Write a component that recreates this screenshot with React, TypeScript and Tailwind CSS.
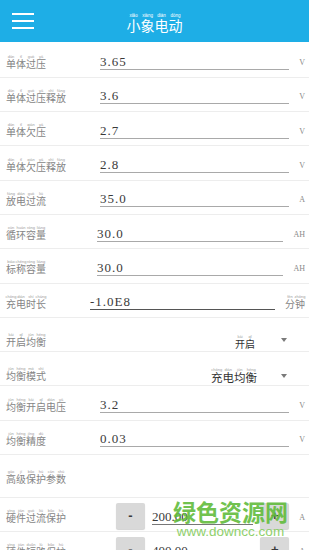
import React from 'react';

const CJK = "font-['Noto_Sans_CJK_SC',sans-serif]";
const SERIF = "font-['Liberation_Serif',serif]";

function Py({
  text,
  py,
  charClass,
  pyClass = 'text-[4px] text-[#a0a0a0]',
}: {
  text: string;
  py: string;
  charClass: string;
  pyClass?: string;
}) {
  const chars = Array.from(text);
  const pys = py.split(' ');
  return (
    <span className={`inline-flex ${CJK}`}>
      {chars.map((c, i) => (
        <span key={i} className="flex flex-col items-center">
          <span className="flex h-[5px] w-0 justify-center">
            <span className={`whitespace-nowrap leading-[5px] font-['Liberation_Sans',sans-serif] ${pyClass}`}>
              {pys[i]}
            </span>
          </span>
          <span className={`leading-none ${charClass}`}>{c}</span>
        </span>
      ))}
    </span>
  );
}

function Label({ text, py }: { text: string; py: string }) {
  return <Py text={text} py={py} charClass="text-[10px] text-[#858585]" />;
}

type InputRow = {
  label: string;
  py: string;
  value: string;
  unit: string;
  unitPy?: string;
  labelW: string;
  dark?: boolean;
};

function FieldRow({ row }: { row: InputRow }) {
  return (
    <div className="flex h-[34.3px] items-center border-b border-[#ededed] pl-[6px] pr-[4px]">
      <div className={`${row.labelW} mt-[2px] flex shrink-0`}>
        <Label text={row.label} py={row.py} />
      </div>
      <div
        className={`flex h-[20px] flex-1 items-end pb-[1px] ${
          row.dark ? 'border-b border-[#555]' : 'border-b-[1.5px] border-[#a9a9a9]'
        }`}
      >
        <span className={`${SERIF} text-[13px] leading-none tracking-[1px] text-[#3a3a3a]`}>{row.value}</span>
      </div>
      {row.unitPy ? (
        <div className="ml-[10px] mt-[3px] flex">
          <Py text={row.unit} py={row.unitPy} charClass="text-[10px] text-[#858585]" />
        </div>
      ) : (
        <div className={`ml-[10px] flex h-[20px] items-end pb-[3px] ${SERIF} text-[8px] leading-none text-[#8a8a8a]`}>
          {row.unit}
        </div>
      )}
    </div>
  );
}

function Triangle({ className }: { className: string }) {
  return (
    <div
      className={`h-0 w-0 border-x-[3.5px] border-t-[4px] border-x-transparent border-t-[#7a7a7a] ${className}`}
    />
  );
}

function StepButton({ sign }: { sign: string }) {
  return (
    <div className="flex h-[26px] w-[29px] shrink-0 items-center justify-center rounded-[2px] bg-[#d9d9d9] shadow-[0_1px_1px_rgba(0,0,0,0.18)]">
      <span className="font-['Liberation_Sans',sans-serif] text-[13px] font-bold leading-none text-[#3a3a3a]">
        {sign}
      </span>
    </div>
  );
}

function StepRow({ label, py, value, unit }: { label: string; py: string; value: string; unit: string }) {
  return (
    <div className="flex h-[34px] items-center border-b border-[#ededed] pl-[6px] pr-[4px]">
      <div className="mt-[1px] flex w-[110px] shrink-0">
        <Label text={label} py={py} />
      </div>
      <div className="mt-[2px] flex">
        <StepButton sign="-" />
      </div>
      <div className="ml-[7px] flex h-[20px] w-[103px] items-end border-b border-[#777] pb-[1px]">
        <span className={`${SERIF} text-[13px] leading-none text-[#3a3a3a]`}>{value}</span>
      </div>
      <div className="ml-[7px] mt-[2px] flex">
        <StepButton sign="+" />
      </div>
      <div className={`ml-[10px] flex h-[20px] items-end pb-[3px] ${SERIF} text-[8px] leading-none text-[#8a8a8a]`}>
        {unit}
      </div>
    </div>
  );
}

const topRows: InputRow[] = [
  { label: '单体过压', py: 'dān tǐ guò yā', value: '3.65', unit: 'V', labelW: 'w-[94px]' },
  { label: '单体过压释放', py: 'dān tǐ guò yā shì fàng', value: '3.6', unit: 'V', labelW: 'w-[94px]' },
  { label: '单体欠压', py: 'dān tǐ qiàn yā', value: '2.7', unit: 'V', labelW: 'w-[94px]' },
  { label: '单体欠压释放', py: 'dān tǐ qiàn yā shì fàng', value: '2.8', unit: 'V', labelW: 'w-[94px]' },
  { label: '放电过流', py: 'fàng diàn guò liú', value: '35.0', unit: 'A', labelW: 'w-[94px]' },
  { label: '循环容量', py: 'xún huán róng liàng', value: '30.0', unit: 'AH', labelW: 'w-[91px]' },
  { label: '标称容量', py: 'biāo chēng róng liàng', value: '30.0', unit: 'AH', labelW: 'w-[91px]' },
  {
    label: '充电时长',
    py: 'chōng diàn shí cháng',
    value: '-1.0E8',
    unit: '分钟',
    unitPy: 'fēn zhōng',
    labelW: 'w-[84px]',
    dark: true,
  },
];

const balanceRows: InputRow[] = [
  { label: '均衡开启电压', py: 'jūn héng kāi qǐ diàn yā', value: '3.2', unit: 'V', labelW: 'w-[94px]' },
  { label: '均衡精度', py: 'jūn héng jīng dù', value: '0.03', unit: 'V', labelW: 'w-[94px]' },
];

export default function App() {
  return (
    <div className="relative h-[550px] w-full overflow-hidden bg-white">
      {/* Title bar */}
      <header className="grid h-[42px] grid-cols-[56px_1fr_56px] items-center bg-[#1eaee6]">
        <div className="flex flex-col gap-[5.5px] pl-[12px]">
          <span className="h-[1.5px] w-[22px] bg-white" />
          <span className="h-[1.5px] w-[22px] bg-white" />
          <span className="h-[1.5px] w-[22px] bg-white" />
        </div>
        <div className="mt-[3px] flex justify-center">
          <Py
            text="小象电动"
            py="xiǎo xiàng diàn dòng"
            charClass="text-[14px] text-white"
            pyClass="text-[4.5px] text-white"
          />
        </div>
        <div />
      </header>

      <div className="pt-[1.5px]">
        {topRows.map((r) => (
          <FieldRow key={r.label} row={r} />
        ))}

        {/* 开启均衡 */}
        <div className="flex h-[34.3px] items-center border-b border-[#ededed] pl-[6px]">
          <div className="mt-[10px] flex w-[94px] shrink-0">
            <Label text="开启均衡" py="kāi qǐ jūn héng" />
          </div>
          <div className="mt-[14px] flex flex-1 justify-end">
            <Py text="开启" py="kāi qǐ" charClass="text-[10px] text-[#333]" />
          </div>
          <Triangle className="ml-[26px] mr-[22px] mt-[10px]" />
        </div>

        {/* 均衡模式 */}
        <div className="flex h-[34.3px] items-center border-b border-[#ededed] pl-[6px]">
          <div className="mt-[10px] flex w-[94px] shrink-0">
            <Label text="均衡模式" py="jūn héng mó shì" />
          </div>
          <div className="mt-[12px] flex flex-1 justify-end">
            <Py text="充电均衡" py="chōng diàn jūn héng" charClass="text-[11.5px] text-[#333]" />
          </div>
          <Triangle className="ml-[24px] mr-[22px] mt-[14px]" />
        </div>

        {balanceRows.map((r) => (
          <FieldRow key={r.label} row={r} />
        ))}

        {/* Section heading */}
        <div className="flex h-[43px] items-center border-b border-[#ededed] pl-[6px]">
          <Label text="高级保护参数" py="gāo jí bǎo hù cān shù" />
        </div>

        <StepRow label="硬件过流保护" py="yìng jiàn guò liú bǎo hù" value="200.00" unit="A" />
        <StepRow label="硬件短路保护" py="yìng jiàn duǎn lù bǎo hù" value="400.00" unit="A" />
      </div>

      {/* Watermark */}
      <div className="pointer-events-none absolute left-[173px] top-[500px] flex flex-col items-center opacity-90">
        <span className={`${CJK} text-[23px] font-bold leading-none text-[#62bc3c]`}>绿色资源网</span>
        <span className="mt-[2px] font-['Liberation_Sans',sans-serif] text-[13.5px] leading-none text-[#84cc5c]">
          www.downcc.com
        </span>
      </div>
    </div>
  );
}
